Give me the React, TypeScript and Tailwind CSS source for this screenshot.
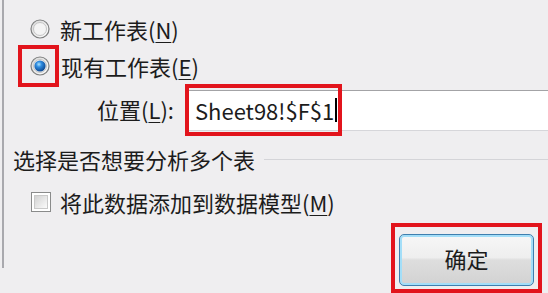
import React from "react";

const font = { fontFamily: '"Noto Sans CJK SC", "Noto Sans", sans-serif' };

function Radio({ checked }: { checked?: boolean }) {
  return (
    <svg width="20" height="20" viewBox="0 0 20 20" className="shrink-0">
      <defs>
        <linearGradient id={checked ? "rgA" : "rgB"} x1="0" y1="0" x2="1" y2="1">
          <stop offset="0" stopColor="#d6d6d6" />
          <stop offset="1" stopColor="#ffffff" />
        </linearGradient>
        <radialGradient id="dot" cx="0.4" cy="0.35" r="0.7">
          <stop offset="0" stopColor="#a9e2ff" />
          <stop offset="0.35" stopColor="#2f8ce0" />
          <stop offset="1" stopColor="#0a3f86" />
        </radialGradient>
      </defs>
      <circle cx="10" cy="10" r="9" fill={`url(#${checked ? "rgA" : "rgB"})`} stroke="#7f8080" strokeWidth="1.2" />
      <circle cx="10" cy="10" r="6.5" fill="#f4f4f4" stroke="#c4c4c4" strokeWidth="1" />
      {checked && <circle cx="10" cy="10" r="5.6" fill="url(#dot)" />}
    </svg>
  );
}

function Checkbox() {
  return (
    <div className="w-[20px] h-[20px] shrink-0 border border-[#8a8b8b] bg-white p-[2px]">
      <div className="w-full h-full border border-[#c9c9c9] bg-gradient-to-br from-[#d2d2d2] to-[#fbfbfb]" />
    </div>
  );
}

function U({ c }: { c: string }) {
  return <span className="underline underline-offset-[3px] decoration-1">{c}</span>;
}

export default function App() {
  return (
    <div
      className="w-[548px] h-[293px] bg-[#efeef0] overflow-hidden flex text-[22px] leading-none text-[#1c1c1c]"
      style={font}
    >
      <div className="ml-[2px] w-[2px] h-[268px] bg-[#a9a9ae] shrink-0" />
      <div className="flex-1 flex flex-col">
        {/* Row 1 */}
        <div className="mt-[18px] h-[26px] flex items-center pl-[26px] gap-[10px]">
          <Radio />
          <span>
            新工作表(<U c="N" />)
          </span>
        </div>
        {/* Row 2 */}
        <div className="mt-[4px] h-[42px] flex items-center pl-[14px] gap-[2px]">
          <div className="w-[41px] h-[42px] border-4 border-[#e2141c] flex items-center justify-center pl-[2px]">
            <Radio checked />
          </div>
          <span>
            现有工作表(<U c="E" />)
          </span>
        </div>
        {/* Row 3 */}
        <div className="h-[48px] flex items-center pl-[93px]">
          <div className="w-[92px] shrink-0">
            位置(<U c="L" />):
          </div>
          <div className="relative flex-1 mt-[3px] h-[41px] bg-white border-t border-t-[#a3a3a6] border-b border-b-[#d6d6da] flex items-center pl-[6px]">
            <span className="text-[22px]">Sheet98!$F$1</span>
            <span className="ml-[1px] w-[1.5px] h-[24px] bg-black" />
            <div className="absolute left-[-4px] top-[-7px] w-[157px] h-[52px] border-4 border-[#e2141c]" />
          </div>
        </div>
        {/* Row 4 */}
        <div className="mt-[15px] h-[30px] flex items-center pl-[9px]">
          <span>选择是否想要分析多个表</span>
          <div className="flex-1 ml-[9px] mt-[2px] h-[1px] bg-[#d4d4d8]" />
        </div>
        {/* Row 5 */}
        <div className="mt-[19px] h-[26px] flex items-center pl-[27px] gap-[9px]">
          <Checkbox />
          <span>
            将此数据添加到数据模型(<U c="M" />)
          </span>
        </div>
        {/* Row 6 */}
        <div className="mt-[10px] flex justify-end pr-[6px]">
          <div className="w-[151px] h-[70px] border-4 border-[#e2141c] pt-[7px] px-[4px] shrink-0">
            <div className="h-[52px] rounded-[5px] border border-[#3f7fae] shadow-[inset_0_0_0_2px_#a3def8] bg-[linear-gradient(to_bottom,#f7f7f7_0%,#eeeeee_45%,#dedede_50%,#d2d2d2_100%)] flex items-center justify-center pb-[4px]">
              确定
            </div>
          </div>
        </div>
      </div>
    </div>
  );
}
